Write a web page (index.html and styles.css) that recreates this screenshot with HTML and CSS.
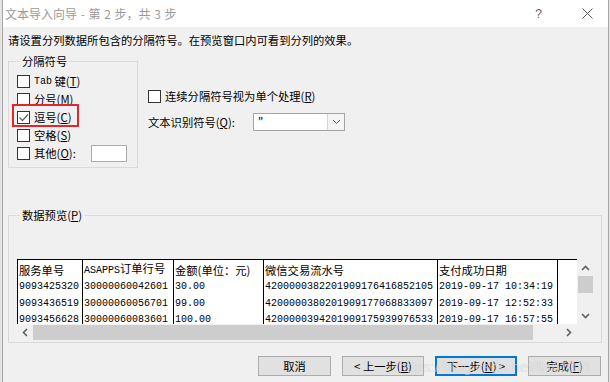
FILE: index.html
```html
<!DOCTYPE html>
<html>
<head>
  <title>文本导入向导</title>
  <link rel="stylesheet" href="styles.css">
</head>
<body>
  <div class="dialog">
    <div class="titlebar">
      <span class="title">文本导入向导 - 第 2 步，共 3 步</span>
      <span class="help">?</span>
      <svg class="close" width="11" height="11" viewBox="0 0 11 11"><path d="M0.5 0.5 L10.5 10.5 M10.5 0.5 L0.5 10.5" stroke="#555" stroke-width="1" fill="none"/></svg>
    </div>
    <div class="content">
      <p class="intro">请设置分列数据所包含的分隔符号。在预览窗口内可看到分列的效果。</p>
      <div class="options">
        <fieldset class="group delims">
          <legend>分隔符号</legend>
          <div class="row"><span class="box"></span><span class="mono">Tab</span>&nbsp;键(<u>T</u>)</div>
          <div class="row"><span class="box"></span>分号(<u>M</u>)</div>
          <div class="row marked"><span class="box"><svg width="11" height="11" viewBox="0 0 11 11"><path d="M1.5 5.5 L4.5 8.5 L10 2.5" stroke="#666" stroke-width="1.3" fill="none"/></svg></span>逗号(<u>C</u>)</div>
          <div class="row"><span class="box"></span>空格(<u>S</u>)</div>
          <div class="row"><span class="box"></span>其他(<u>O</u>):<span class="other"></span></div>
        </fieldset>
        <div class="side">
          <div class="row"><span class="box"></span>连续分隔符号视为单个处理(<u>R</u>)</div>
          <div class="qualifier">
            <span class="qlabel">文本识别符号(<u>Q</u>):</span>
            <div class="combo">
              <span class="val">"</span>
              <span class="drop"><svg width="9" height="6" viewBox="0 0 9 6"><path d="M1 1 L4.5 4.5 L8 1" stroke="#555" stroke-width="1" fill="none"/></svg></span>
            </div>
          </div>
        </div>
      </div>

      <fieldset class="group preview">
        <legend>数据预览(<u>P</u>)</legend>
        <div class="grid">
          <div class="viewport">
            <table>
              <colgroup>
                <col style="width:65px"><col style="width:91px"><col style="width:90px"><col style="width:174px"><col style="width:120px"><col style="width:20px">
              </colgroup>
              <tr class="head"><td>服务单号</td><td><span class="mono">ASAPPS</span>订单行号</td><td>金额(单位：元)</td><td>微信交易流水号</td><td>支付成功日期</td><td></td></tr>
              <tr><td>9093425320</td><td>30000060042601</td><td>30.00</td><td>4200000382201909176416852105</td><td>2019-09-17 10:34:19</td><td></td></tr>
              <tr><td>9093436519</td><td>30000060056701</td><td>99.00</td><td>4200000380201909177068833097</td><td>2019-09-17 12:52:33</td><td></td></tr>
              <tr><td>9093456628</td><td>30000060083601</td><td>100.00</td><td>4200000394201909175939976533</td><td>2019-09-17 16:57:55</td><td></td></tr>
            </table>
          </div>
          <div class="vscroll">
            <span class="arrow"><svg width="9" height="6" viewBox="0 0 9 6"><path d="M1 5 L4.5 1.5 L8 5" stroke="#606060" stroke-width="1.6" fill="none"/></svg></span>
            <span class="vthumb"></span>
            <span class="vtrack"></span>
            <span class="arrow"><svg width="9" height="6" viewBox="0 0 9 6"><path d="M1 1 L4.5 4.5 L8 1" stroke="#606060" stroke-width="1.6" fill="none"/></svg></span>
          </div>
          <div class="hscroll">
            <span class="arrow"><svg width="6" height="9" viewBox="0 0 6 9"><path d="M5 1 L1.5 4.5 L5 8" stroke="#606060" stroke-width="1.6" fill="none"/></svg></span>
            <span class="hthumb"></span>
            <span class="htrack"></span>
            <span class="arrow"><svg width="6" height="9" viewBox="0 0 6 9"><path d="M1 1 L4.5 4.5 L1 8" stroke="#606060" stroke-width="1.6" fill="none"/></svg></span>
          </div>
          <div class="corner"></div>
        </div>
      </fieldset>

      <div class="buttons">
        <button class="btn narrow">取消</button>
        <button class="btn">&lt; 上一步(<u>B</u>)</button>
        <button class="btn default">下一步(<u>N</u>) &gt;</button>
        <button class="btn narrow">完成(<u>F</u>)</button>
      </div>
    </div>
    <span class="watermark">https://blog.csdn.net/lla61011</span>
  </div>
</body>
</html>
```

FILE: styles.css
```css
body, html {
  margin: 0;
  width: 610px;
  height: 382px;
  overflow: hidden;
  background: #e4e4e4;
}
.dialog {
  position: relative;
  box-sizing: border-box;
  margin-left: 2px;
  width: 607px;
  height: 382px;
  border-left: 1px solid #a6a6a6;
  border-right: 1px solid #a6a6a6;
  background: #f0f0f0;
  font-family: "Noto Sans CJK SC", sans-serif;
  font-size: 11.3px;
  color: #000;
}
u {
  text-decoration: underline;
  text-underline-offset: 1px;
}
.mono {
  font-family: "Liberation Mono", monospace;
  font-size: 10px;
}
.titlebar {
  display: flex;
  align-items: center;
  height: 27px;
  background: #fff;
  padding-left: 2px;
}
.title {
  flex: 1;
  font-size: 12px;
  word-spacing: 1px;
  color: #9a9a9a;
}
.help {
  font-family: "Liberation Sans", sans-serif;
  font-size: 12px;
  color: #666;
  margin-right: 40px;
}
.close {
  margin-right: 15px;
}
.content {
  padding: 0 6px 0 5px;
}
.intro {
  margin: 6px 0 6px;
  line-height: 14px;
}
.options {
  display: flex;
}
.group {
  margin: 0;
  border: 1px solid #dadada;
  min-width: 0;
}
.group legend {
  padding: 0 2px;
  margin-left: 3px;
  line-height: 16px;
}
.delims {
  box-sizing: border-box;
  width: 130px;
  padding: 3px 0 5px 8px;
}
.row {
  display: flex;
  align-items: center;
  height: 18px;
  white-space: nowrap;
}
.box {
  box-sizing: border-box;
  width: 13px;
  height: 13px;
  border: 1px solid #333;
  background: #fff;
  margin-right: 4px;
  display: flex;
  align-items: center;
  justify-content: center;
}
.marked {
  position: relative;
}
.marked::after {
  content: "";
  position: absolute;
  left: -5px;
  top: -4px;
  width: 63px;
  height: 19px;
  border: 2px solid #e3262a;
}
.other {
  box-sizing: border-box;
  width: 36px;
  height: 17px;
  margin-left: 15px;
  background: #fff;
  border: 1px solid #ababab;
}
.side {
  margin-left: 10px;
  padding-top: 34px;
}
.qualifier {
  display: flex;
  align-items: center;
  margin-top: 8px;
}
.qlabel {
  width: 105px;
}
.combo {
  box-sizing: border-box;
  display: flex;
  width: 92px;
  height: 18px;
  background: #fff;
  border: 1px solid #a4a4a4;
}
.combo .val {
  flex: 1;
  padding-left: 4px;
  line-height: 14px;
}
.combo .drop {
  width: 16px;
  border-left: 1px solid #d4d4d4;
  background: #f4f4f4;
  display: flex;
  align-items: center;
  justify-content: center;
}
.preview {
  margin-top: 39px;
  padding: 36px 7px 2px 8px;
}
.grid {
  display: grid;
  grid-template-columns: 560px 17px;
  grid-template-rows: 65px 16px;
}
.viewport {
  overflow: hidden;
  background: #fff;
}
table {
  table-layout: fixed;
  border-collapse: collapse;
  width: 560px;
  border-top: 1px solid #000;
}
td {
  box-sizing: border-box;
  border-left: 1px solid #000;
  padding: 0 0 0 1px;
  height: 16.5px;
  line-height: 16px;
  white-space: nowrap;
  overflow: hidden;
  font-family: "Liberation Mono", monospace;
  font-size: 10px;
}
td:last-child {
  border-right: 1px solid #000;
}
.head td {
  height: 17px;
  font-family: "Noto Sans CJK SC", sans-serif;
  font-size: 11.3px;
}
.vscroll {
  display: flex;
  flex-direction: column;
  align-items: center;
  background: #f0f0f0;
}
.vscroll .arrow {
  height: 17px;
  display: flex;
  align-items: center;
  justify-content: center;
}
.vthumb {
  width: 15px;
  height: 17px;
  background: #cdcdcd;
}
.vtrack {
  flex: 1;
}
.hscroll {
  display: flex;
  align-items: center;
  background: #f0f0f0;
}
.hscroll .arrow {
  width: 16px;
  display: flex;
  justify-content: center;
}
.hthumb {
  width: 500px;
  height: 15px;
  background: #cdcdcd;
}
.htrack {
  flex: 1;
}
.corner {
  background: #f0f0f0;
}
.buttons {
  display: flex;
  justify-content: flex-end;
  gap: 11px;
  margin-top: 13px;
  margin-right: 1px;
}
.btn {
  box-sizing: border-box;
  width: 82px;
  height: 20px;
  padding: 0;
  background: #e1e1e1;
  border: 1px solid #adadad;
  font-family: "Noto Sans CJK SC", sans-serif;
  font-size: 11.3px;
  color: #000;
}
.btn.narrow {
  width: 73px;
}
.btn.default {
  border: 2px solid #0078d7;
}
.watermark {
  position: absolute;
  left: 395px;
  top: 358px;
  font-family: "Liberation Sans", sans-serif;
  font-size: 15px;
  color: rgba(255, 255, 255, 0.55);
  text-shadow: 0 0 1px rgba(0, 0, 0, 0.18);
  pointer-events: none;
}
```
